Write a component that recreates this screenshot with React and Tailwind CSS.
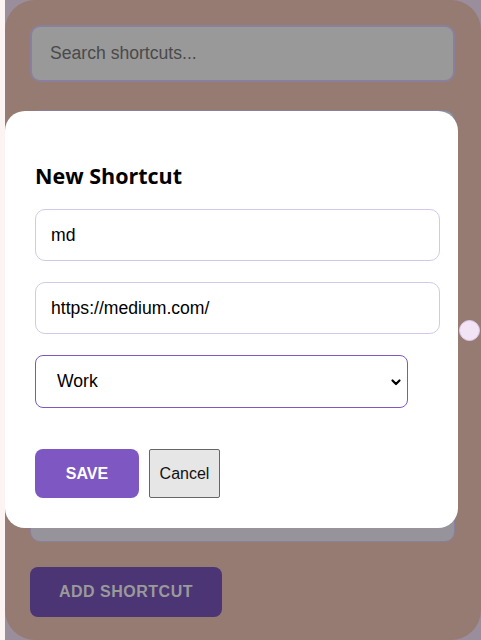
export default function App() {
  return (
    <div className="relative flex h-[640px] w-[481px] overflow-hidden" style={{ fontFamily: '"Liberation Sans", Arial, sans-serif' }}>
      <div className="w-[5px] shrink-0 bg-[#fbf4f3]" />
      <div className="flex-1 bg-[#9a8e9c]">
        <div className="flex h-[640px] flex-col rounded-[30px] bg-[#967b73] pl-[25px] pr-[26px] pt-[25px]">
          <div className="flex h-[57px] items-center rounded-[10px] border-2 border-[#8a7f9c] bg-[#999999] px-[18px] text-[17.6px] text-[#4a4a4a]">
            Search shortcuts...
          </div>
          <div className="mt-[28px] h-[432px] rounded-[10px] border border-[#8a7f9c] bg-[#96939a]" />
          <div className="mt-[25px] flex h-[50px] w-[192px] items-center justify-center rounded-[8px] bg-[#4b3574] text-[16px] font-bold tracking-[0.5px] text-[#9a9a9a]">
            ADD SHORTCUT
          </div>
        </div>
      </div>

      <div className="absolute left-[5px] top-[111px] h-[417px] w-[453px] rounded-[20px] bg-white px-[30px] pt-[52px]">
        <h2 className="text-[21.5px] font-bold leading-[26px] text-black" style={{ fontFamily: '"Open Sans", "Noto Sans", sans-serif' }}>
          New Shortcut
        </h2>
        <div className="mt-[20px] flex h-[52px] w-[405px] items-center rounded-[10px] border border-[#d4c8ea] px-[15px] text-[17.6px] text-black">
          md
        </div>
        <div className="mt-[21px] flex h-[52px] w-[405px] items-center rounded-[10px] border border-[#d4c8ea] px-[15px] text-[17.6px] text-black">
          https://medium.com/
        </div>
        <div className="mt-[21px] flex h-[53px] w-[373px] items-center justify-between rounded-[8px] border border-[#7e57c2] pl-[21px] pr-[5px] text-[17.6px] text-black">
          <span>Work</span>
          <svg width="12" height="12" viewBox="0 0 12 12" fill="none" stroke="black" strokeWidth="2.2" strokeLinecap="round" strokeLinejoin="round">
            <path d="M2.5 4.5 L6 8 L9.5 4.5" />
          </svg>
        </div>
        <div className="mt-[41px] flex gap-[10px]">
          <div className="flex h-[49px] w-[104px] items-center justify-center rounded-[8px] bg-[#7e57c2] text-[16px] font-bold text-white">
            SAVE
          </div>
          <div className="flex h-[49px] w-[71px] items-center justify-center rounded-[2px] border border-[#666666] bg-[#e6e6e6] text-[16px] text-[#111]">
            Cancel
          </div>
        </div>
      </div>

      <div className="absolute left-[459px] top-[320px] h-[21px] w-[21px] rounded-full border border-[#dcc8ee] bg-[#f2e4f5]" />
    </div>
  );
}
